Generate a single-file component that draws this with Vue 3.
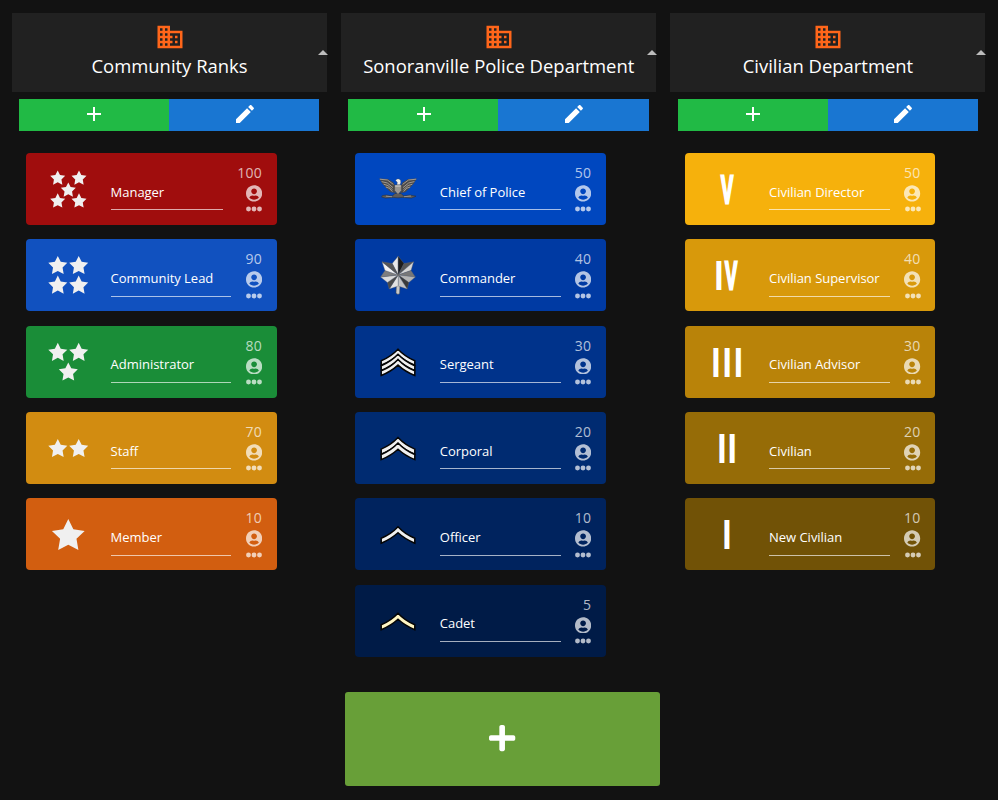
<script setup>
const starPoints = (cx, cy, r) =>
  Array.from({ length: 10 }, (_, i) => {
    const a = -Math.PI / 2 + (i * Math.PI) / 5
    const q = i % 2 ? r * 0.5 : r
    return `${(cx + q * Math.cos(a)).toFixed(2)},${(cy + q * Math.sin(a)).toFixed(2)}`
  }).join(' ')

const stars = (r, list) => ({ type: 'stars', points: list.map(([x, y]) => starPoints(x, y, r)) })
const chevrons = (fill, start, pitch, count, extra = 0) => ({
  type: 'chevrons',
  fill,
  extra,
  rows: Array.from({ length: count }, (_, i) => start + i * pitch),
})
const numeral = (...glyphs) => ({ type: 'numeral', glyphs })

// Oak leaf: each facet spans the centre, a lobe tip and one neighbouring notch.
const leafTips = [[24.2, 5.2], [39.6, 10.8], [41.3, 26], [33.2, 38], [15.2, 38], [6.6, 26], [8, 10.8]]
const leafNotches = [[30, 12.5], [37, 19.5], [34.8, 31.5], [24.2, 35], [13.4, 31.5], [11, 19.5], [18.2, 12.5]]
const leafShades = [['#e8e8e8', '#1c1c1c'], ['#555', '#d5d5d5'], ['#777', '#b5b5b5'], ['#3a3a3a', '#c4c4c4'], ['#e2e2e2', '#4a4a4a'], ['#dcdcdc', '#7e7e7e'], ['#f2f2f2', '#555']]
const leafFacets = leafTips.flatMap((tip, i) => [
  { points: `24.2,24 ${leafNotches[(i + 6) % 7]} ${tip}`, fill: leafShades[i][0] },
  { points: `24.2,24 ${tip} ${leafNotches[i]}`, fill: leafShades[i][1] },
])

const departments = [
  {
    name: 'Community Ranks',
    ranks: [
      { name: 'Manager', level: 100, color: '#a00d0d', icon: stars(7.9, [[13.7, 13.3], [35, 13.3], [24.3, 25.3], [13.7, 36.2], [35, 36.2]]) },
      { name: 'Community Lead', level: 90, color: '#1151bf', icon: stars(10, [[13.8, 14.9], [34.7, 14.9], [13.8, 34.6], [34.7, 34.6]]) },
      { name: 'Administrator', level: 80, color: '#1a8d38', icon: stars(10, [[13.8, 14.8], [34.7, 14.8], [24.3, 34.4]]) },
      { name: 'Staff', level: 70, color: '#d28c11', icon: stars(10, [[13.8, 24.9], [34.7, 24.9]]) },
      { name: 'Member', level: 10, color: '#d25e10', icon: stars(17.2, [[24.3, 26.2]]) },
    ],
  },
  {
    name: 'Sonoranville Police Department',
    ranks: [
      { name: 'Chief of Police', level: 50, color: '#0047bf', icon: { type: 'eagle' } },
      { name: 'Commander', level: 40, color: '#003aa3', icon: { type: 'leaf' } },
      { name: 'Sergeant', level: 30, color: '#00338b', icon: chevrons('#f0f0f0', -6.3, 5.1, 3) },
      { name: 'Corporal', level: 20, color: '#002b71', icon: chevrons('#f0f0f0', -3.9, 5.4, 2, 0.5) },
      { name: 'Officer', level: 10, color: '#00235e', icon: chevrons('#f0f0f0', -0.7, 5, 1, 0.3) },
      { name: 'Cadet', level: 5, color: '#001b47', icon: chevrons('#fff6c4', -1.2, 5, 1, 0.3) },
    ],
  },
  {
    name: 'Civilian Department',
    ranks: [
      { name: 'Civilian Director', level: 50, color: '#f6b10c', icon: numeral(['V', 23.6]) },
      { name: 'Civilian Supervisor', level: 40, color: '#d8990b', icon: numeral(['I', 15.8], ['V', 27.4]) },
      { name: 'Civilian Advisor', level: 30, color: '#b98309', icon: numeral(['I', 12.9], ['I', 24.2], ['I', 35.3]) },
      { name: 'Civilian', level: 20, color: '#966c07', icon: numeral(['I', 18.8], ['I', 29.2]) },
      { name: 'New Civilian', level: 10, color: '#715206', icon: numeral(['I', 24]) },
    ],
  },
]
</script>

<template>
  <main class="page">
    <div class="columns">
      <section v-for="dept in departments" :key="dept.name" class="column">
        <header class="head">
          <svg class="building" viewBox="0 0 24 24"><path d="M12 7V3H2v18h20V7H12zM6 19H4v-2h2v2zm0-4H4v-2h2v2zm0-4H4V9h2v2zm0-4H4V5h2v2zm4 12H8v-2h2v2zm0-4H8v-2h2v2zm0-4H8V9h2v2zm0-4H8V5h2v2zm10 12h-8v-2h2v-2h-2v-2h2v-2h-2V9h8v10zm-2-8h-2v2h2v-2zm0 4h-2v2h2v-2z" /></svg>
          <h2 class="title">{{ dept.name }}</h2>
          <svg class="caret" viewBox="0 0 24 24"><path d="M7 14l5-5 5 5z" /></svg>
        </header>
        <div class="actions">
          <button class="action add">
            <svg viewBox="0 0 24 24"><path d="M19 13h-6v6h-2v-6H5v-2h6V5h2v6h6v2z" /></svg>
          </button>
          <button class="action edit">
            <svg viewBox="0 0 24 24"><path d="M3 17.25V21h3.75L17.81 9.94l-3.75-3.75L3 17.25zM20.71 7.04c.39-.39.39-1.02 0-1.41l-2.34-2.34c-.39-.39-1.02-.39-1.41 0l-1.83 1.83 3.75 3.75 1.83-1.83z" /></svg>
          </button>
        </div>
        <div class="ranks">
          <article v-for="rank in dept.ranks" :key="rank.name" class="rank" :style="{ background: rank.color }">
            <div class="badge">
              <svg v-if="rank.icon.type === 'stars'" viewBox="0 0 48 48">
                <polygon v-for="p in rank.icon.points" :key="p" :points="p" fill="#f0f0f0" />
              </svg>
              <svg v-else-if="rank.icon.type === 'chevrons'" viewBox="0 0 48 48">
                <path
                  v-for="y in rank.icon.rows"
                  :key="y"
                  :transform="`translate(0 ${y})`"
                  :d="`M7.2 29 Q17 25 24 17.5 Q31 25 40.8 29 V${33.6 + rank.icon.extra} Q31 ${29.6 + rank.icon.extra} 24 ${23.2 + rank.icon.extra} Q17 ${29.6 + rank.icon.extra} 7.2 ${33.6 + rank.icon.extra} Z`"
                  :fill="rank.icon.fill"
                  stroke="#050505"
                  stroke-width="1.5"
                />
              </svg>
              <svg v-else-if="rank.icon.type === 'numeral'" viewBox="0 0 48 48" class="numeral">
                <text
                  v-for="[glyph, x] in rank.icon.glyphs"
                  :key="x"
                  :class="glyph === 'V' ? 'narrow' : 'stem'"
                  :transform="glyph === 'V' ? `translate(${x + 0.6} 37.6) scale(0.47 1)` : `translate(${x} 38.7) scale(0.8 1)`"
                >{{ glyph }}</text>
              </svg>
              <svg v-else-if="rank.icon.type === 'leaf'" viewBox="0 0 48 48">
                <path d="M22.4 34h3.6l-.4 8.4-1.6 1-2-1.2z" fill="#c8c8c8" stroke="#444" stroke-width=".5" />
                <polygon
                  v-for="f in leafFacets"
                  :key="f.points"
                  :points="f.points"
                  :fill="f.fill"
                  stroke="#666"
                  stroke-width=".35"
                  stroke-linejoin="round"
                />
              </svg>
              <svg v-else viewBox="0 0 48 48">
                <g fill="#4c4a48">
                  <path d="M5.2 13.6l8.6.4 5.6 3.4 2.4 4.6-.4 6-4.6-.8-4.6-4.1-4-4.6z" />
                  <path d="M42.8 13.6l-8.6.4-5.6 3.4-2.4 4.6.4 6 4.6-.8 4.6-4.1 4-4.6z" />
                </g>
                <path
                  d="M5.8 14.2l7.6.8 6 4.4M7.6 16.6l5.8 1.4 5.6 4.6M9.6 19.2l4.4 1.4 4.6 4.2M11.8 22l3.4 1.2 3.2 3.4M42.2 14.2l-7.6.8-6 4.4M40.4 16.6l-5.8 1.4-5.6 4.6M38.4 19.2l-4.4 1.4-4.6 4.2M36.2 22l-3.4 1.2-3.2 3.4"
                  fill="none"
                  stroke="#aaa49c"
                  stroke-width=".9"
                />
                <path d="M8.4 30.6l4-.6 6 1 2.6-2.6h6l2.6 2.6 6-1 6.4 1.2-4.6 1.9-9-.7-4.4.4-4.4-.4-8 .7-4-1z" fill="#5f5c59" stroke="#2c2c2c" stroke-width=".5" />
                <path d="M12 31.2l6 .5M30 31.7l7-.7" stroke="#aaa" stroke-width=".7" />
                <path d="M20.6 20h6.8v5.6L24 29.4l-3.4-3.8z" fill="#9b9792" stroke="#444" stroke-width=".5" />
                <path d="M21.6 15.6l1.4-1.6 2-.1 1.6 1.3.2 2.3-.8 2.3h-3l.3-2.6z" fill="#ededed" stroke="#555" stroke-width=".4" />
                <path d="M21.2 21h5.6" stroke="#ddd" stroke-width=".9" />
              </svg>
            </div>
            <div class="name">{{ rank.name }}</div>
            <div class="meta">
              <span class="level">{{ rank.level }}</span>
              <svg class="user" viewBox="0 0 496 512"><path d="M248 8C111 8 0 119 0 256s111 248 248 248 248-111 248-248S385 8 248 8zm0 96c48.6 0 88 39.4 88 88s-39.4 88-88 88-88-39.4-88-88 39.4-88 88-88zm0 344c-58.7 0-111.3-26.6-146.5-68.2 18.8-35.4 55.6-59.8 98.5-59.8 2.4 0 4.8.4 7.1 1.1 13 4.2 26.6 6.9 40.9 6.9s28-2.7 40.9-6.9c2.3-.7 4.7-1.1 7.1-1.1 42.9 0 79.7 24.4 98.5 59.8C359.3 421.4 306.7 448 248 448z" /></svg>
              <svg class="dots" viewBox="0 0 16 6"><circle cx="2.5" cy="3" r="2.45" /><circle cx="8" cy="3" r="2.45" /><circle cx="13.5" cy="3" r="2.45" /></svg>
            </div>
          </article>
        </div>
      </section>
    </div>
    <button class="new-department">
      <svg viewBox="0 0 448 512"><path d="M416 208H272V64c0-17.67-14.33-32-32-32h-32c-17.67 0-32 14.33-32 32v144H32c-17.67 0-32 14.33-32 32v32c0 17.67 14.33 32 32 32h144v144c0 17.67 14.33 32 32 32h32c17.67 0 32-14.33 32-32V304h144c17.67 0 32-14.33 32-32v-32c0-17.67-14.33-32-32-32z" /></svg>
    </button>
  </main>
</template>

<style>
body {
  background: #121212;
}
</style>

<style scoped>
.page {
  box-sizing: border-box;
  min-height: 800px;
  padding: 13px 12px 14px;
  font-family: "Open Sans", sans-serif;
  color: #fff;
  background: #121212;
}
svg {
  display: block;
  fill: currentColor;
}
.columns {
  display: grid;
  grid-template-columns: repeat(3, 315px);
  column-gap: 14.24px;
}
.head {
  position: relative;
  box-sizing: border-box;
  height: 79px;
  padding-top: 8.5px;
  display: flex;
  flex-direction: column;
  align-items: center;
  background: #212121;
}
.building {
  width: 30px;
  height: 30px;
  color: #ff661a;
}
.title {
  margin: 0.6px 0 0;
  font-size: 18.45px;
  line-height: 28px;
  font-weight: 400;
  white-space: nowrap;
}
.caret {
  position: absolute;
  width: 24px;
  height: 24px;
  top: 28px;
  right: -7.5px;
  color: #bdbdbd;
}
.actions {
  display: flex;
  height: 32px;
  width: 300.3px;
  margin: 7px 0 0 7.1px;
}
button {
  padding: 0;
  border: 0;
  color: #fff;
  display: flex;
  align-items: center;
  justify-content: center;
}
.action {
  flex: 1;
}
.action svg {
  width: 24px;
  height: 24px;
  margin: -1.2px 0 0 0.6px;
}
.add {
  background: #21ba45;
}
.edit {
  background: #1976d2;
}
.ranks {
  display: flex;
  flex-direction: column;
  gap: 14.3px;
  width: 250.6px;
  margin: 22.1px 0 0 14.2px;
}
.rank {
  box-sizing: border-box;
  height: 72px;
  padding-right: 14.7px;
  display: flex;
  align-items: flex-start;
  border-radius: 4px;
}
.badge {
  width: 66.3px;
  padding: 12px 0 0 18.1px;
  flex: none;
}
.badge svg {
  width: 48px;
  height: 48px;
}
.numeral text {
  font-family: "Liberation Sans", sans-serif;
  font-weight: 700;
  text-anchor: middle;
  fill: #fff;
}
.stem {
  font-size: 42px;
}
.narrow {
  font-size: 39px;
  stroke: #fff;
  stroke-width: 2.8px;
}
.name {
  box-sizing: border-box;
  flex: 1;
  height: 57.3px;
  padding-top: 28.7px;
  border-bottom: 1px solid rgba(255, 255, 255, 0.65);
  font-size: 13px;
  line-height: 20px;
  letter-spacing: -0.03px;
  white-space: nowrap;
}
.meta {
  margin-left: 14.3px;
  padding-top: 10px;
  display: flex;
  flex-direction: column;
  align-items: flex-end;
  color: rgba(255, 255, 255, 0.7);
}
.level {
  font-size: 14px;
  line-height: 20px;
  letter-spacing: 0.25px;
}
.user {
  width: 16.2px;
  height: 16.8px;
  margin-top: 2px;
}
.dots {
  width: 16px;
  height: 6px;
  margin-top: 4.5px;
}
.new-department {
  width: 315px;
  height: 94px;
  margin: 35.4px 0 0 333px;
  border-radius: 3px;
  background: #689f38;
}
.new-department svg {
  width: 26.3px;
  height: 30px;
  margin-top: -2px;
}
</style>
